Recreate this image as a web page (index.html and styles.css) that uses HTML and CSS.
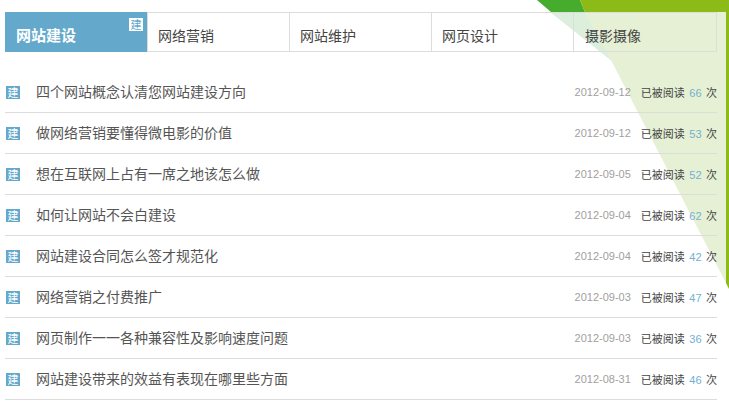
FILE: index.html
```html
<!DOCTYPE html>
<html lang="zh-CN">
<head>
<meta charset="UTF-8">
<title>网站建设</title>
<link rel="stylesheet" href="styles.css">
</head>
<body>
<svg class="corner" width="200" height="300" viewBox="0 0 200 300">
  <polygon points="8,0 51,0 56,12 22,12" fill="#46ac2e"/>
  <polygon points="51,0 200,0 200,289 197,283 197,12 56,12" fill="#8cbb18"/>
  <polygon points="21,12 56,12 84,62" fill="#dcefdc"/>
  <polygon points="56,12 197,12 197,283 83,62" fill="#e6f0d4"/>
</svg>
<div class="tabs">
  <div class="tab active">网站建设<span class="mark">建</span></div>
  <div class="tab">网络营销</div>
  <div class="tab">网站维护</div>
  <div class="tab">网页设计</div>
  <div class="tab">摄影摄像</div>
</div>
<ul class="list">
  <li><span class="tag">建</span><span class="title">四个网站概念认清您网站建设方向</span><span class="date">2012-09-12</span><span class="reads">已被阅读 <b>66</b> 次</span></li>
  <li><span class="tag">建</span><span class="title">做网络营销要懂得微电影的价值</span><span class="date">2012-09-12</span><span class="reads">已被阅读 <b>53</b> 次</span></li>
  <li><span class="tag">建</span><span class="title">想在互联网上占有一席之地该怎么做</span><span class="date">2012-09-05</span><span class="reads">已被阅读 <b>52</b> 次</span></li>
  <li><span class="tag">建</span><span class="title">如何让网站不会白建设</span><span class="date">2012-09-04</span><span class="reads">已被阅读 <b>62</b> 次</span></li>
  <li><span class="tag">建</span><span class="title">网站建设合同怎么签才规范化</span><span class="date">2012-09-04</span><span class="reads">已被阅读 <b>42</b> 次</span></li>
  <li><span class="tag">建</span><span class="title">网络营销之付费推广</span><span class="date">2012-09-03</span><span class="reads">已被阅读 <b>47</b> 次</span></li>
  <li><span class="tag">建</span><span class="title">网页制作一一各种兼容性及影响速度问题</span><span class="date">2012-09-03</span><span class="reads">已被阅读 <b>36</b> 次</span></li>
  <li><span class="tag">建</span><span class="title">网站建设带来的效益有表现在哪里些方面</span><span class="date">2012-08-31</span><span class="reads">已被阅读 <b>46</b> 次</span></li>
</ul>
</body>
</html>
```

FILE: styles.css
```css
/* page */
html, body {
  margin: 0;
  height: 407px;
  overflow: hidden;
  background: #fff;
}

body {
  position: relative;
  padding: 12px 12px 0 5px;
  box-sizing: border-box;
  font-family: "Noto Sans CJK SC", "Liberation Sans", sans-serif;
  color: #444;
}

/* green corner behind the content */
.corner {
  position: absolute;
  top: 0;
  right: 0;
}

/* tabs */
.tabs {
  position: relative;
  display: flex;
  height: 40px;
  box-sizing: border-box;
  border: 1px solid #dcdcdc;
  border-left: none;
}

.tab {
  position: relative;
  width: 142px;
  box-sizing: border-box;
  padding-left: 10px;
  border-left: 1px solid #dcdcdc;
  font-size: 14px;
  line-height: 44px;
  color: #444;
}

.tab:last-child {
  flex: 1;
  padding-left: 11px;
}

.tab.active {
  margin: -1px 0;
  padding-left: 11px;
  border-left: none;
  background: #64a8cc;
  color: #fff;
  font-size: 15px;
  font-weight: bold;
  line-height: 46px;
}

.mark {
  position: absolute;
  top: 6px;
  right: 4px;
  width: 14px;
  height: 13px;
  background: #fff;
  color: #64a8cc;
  font-size: 11px;
  font-weight: normal;
  line-height: 13px;
  text-align: center;
}

/* article list */
.list {
  position: relative;
  margin: 20px 0 0;
  padding: 0;
  list-style: none;
}

.list li {
  display: flex;
  align-items: center;
  height: 41px;
  box-sizing: border-box;
  padding-left: 1px;
  border-bottom: 1px solid #dcdcdc;
}

.tag {
  width: 14px;
  height: 13px;
  margin-right: 16px;
  background: #64a8cc;
  color: #fff;
  font-size: 11px;
  line-height: 13px;
  text-align: center;
}

.title {
  flex: 1;
  padding-bottom: 3px;
  font-size: 14px;
  color: #555;
}

.date {
  margin-right: 10px;
  font-family: "Liberation Sans", sans-serif;
  font-size: 11px;
  color: #a0a0a0;
}

.reads {
  font-size: 11px;
  color: #444;
}

.reads b {
  margin: 0 2px;
  font-family: "Liberation Sans", sans-serif;
  font-weight: normal;
  color: #72b0d2;
}
```
